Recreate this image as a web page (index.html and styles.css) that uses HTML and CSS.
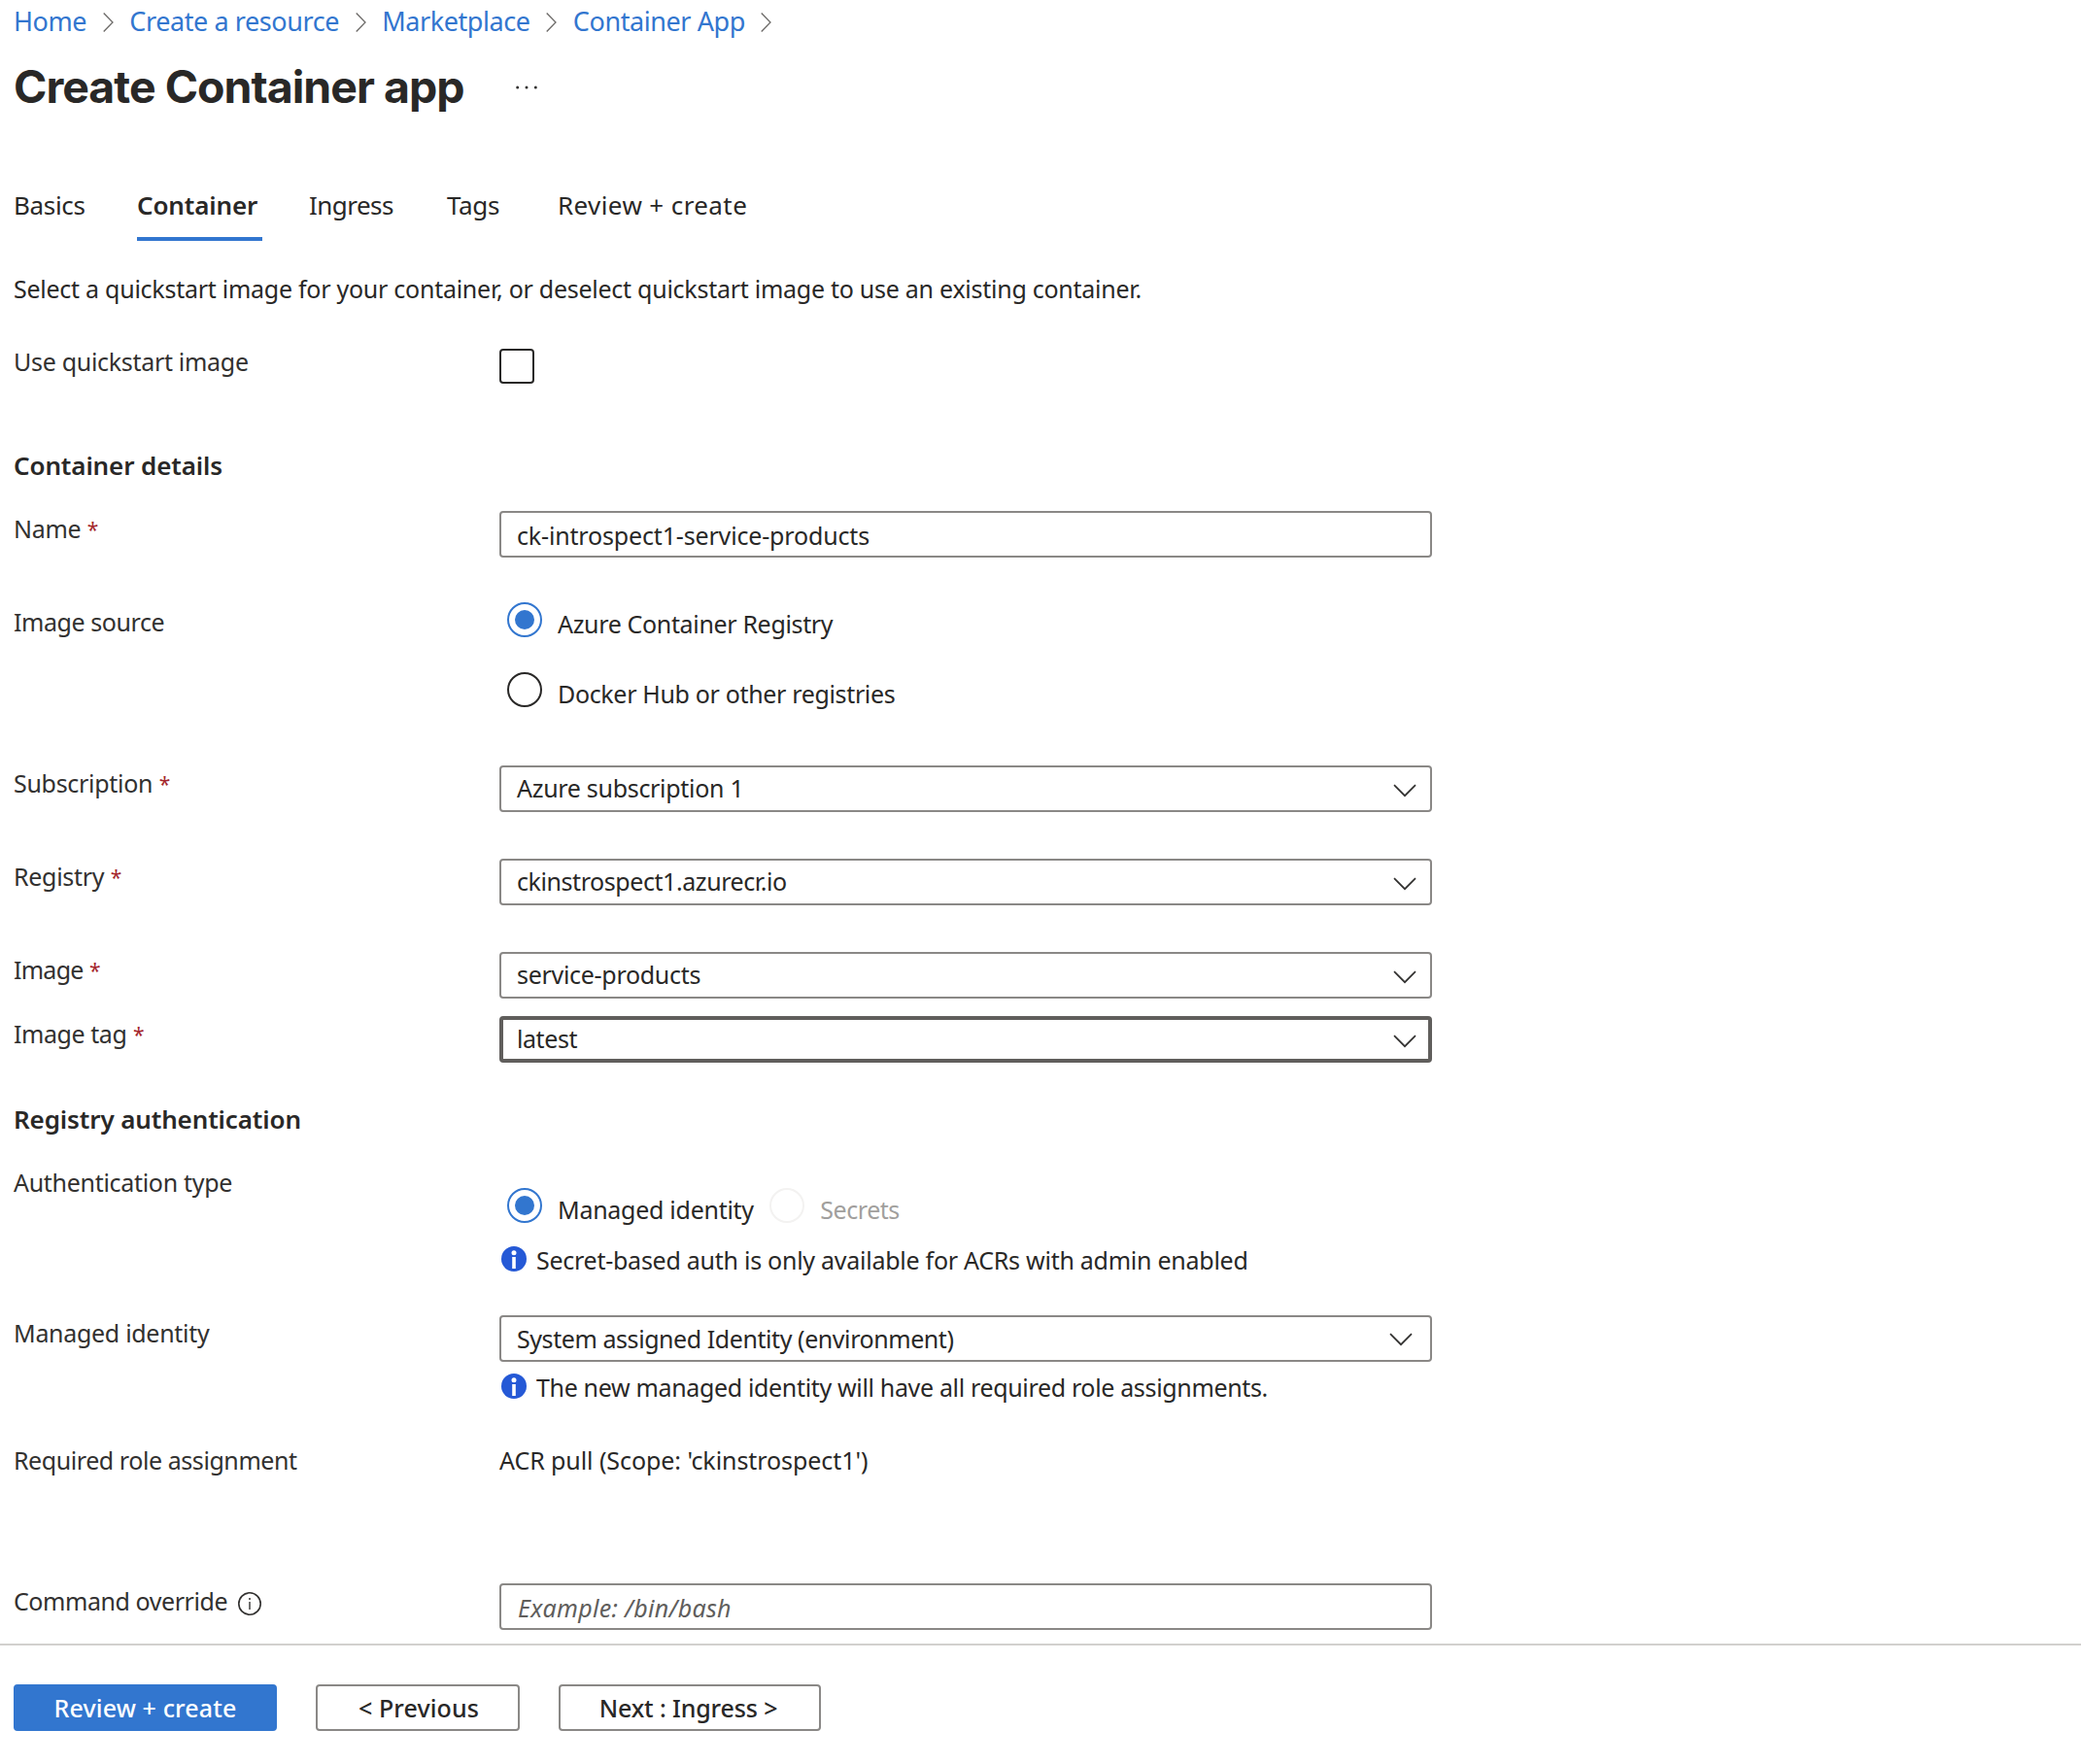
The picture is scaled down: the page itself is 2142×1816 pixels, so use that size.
FILE: index.html
```
<!DOCTYPE html>
<html lang="en">
<head>
<meta charset="utf-8">
<title>Create Container app</title>
<link rel="stylesheet" href="styles.css">
</head>
<body>
<svg class="sprite" aria-hidden="true">
  <symbol id="crumb" viewBox="0 0 11 20"><path d="M0.7 0.5 10 10 0.7 19.5" fill="none" stroke="#6b6967" stroke-width="1.3"/></symbol>
  <symbol id="chevron" viewBox="0 0 24 14"><path d="M1 1.2 12 12.2 23 1.2" fill="none" stroke="#323130" stroke-width="1.7"/></symbol>
  <symbol id="info" viewBox="0 0 26 26"><circle cx="13" cy="13" r="13" fill="#2559d6"/><circle cx="13" cy="6.7" r="2.5" fill="#fff"/><path d="M11.2 11h3.6v12h-3.6z" fill="#fff"/></symbol>
  <symbol id="info-outline" viewBox="0 0 24 24"><circle cx="12" cy="12" r="11.2" fill="none" stroke="#323130" stroke-width="1.6"/><circle cx="12" cy="7" r="1" fill="#323130"/><path d="M11.3 10h1.4v8h-1.4z" fill="#323130"/></symbol>
</svg>

<header class="header">
  <nav class="breadcrumb">
    <a>Home</a><svg><use href="#crumb"/></svg>
    <a>Create a resource</a><svg><use href="#crumb"/></svg>
    <a>Marketplace</a><svg><use href="#crumb"/></svg>
    <a>Container App</a><svg><use href="#crumb"/></svg>
  </nav>
  <div class="title-bar">
    <h1>Create Container app</h1>
    <svg class="more" viewBox="0 0 22 4"><g fill="#323130"><circle cx="1.7" cy="2" r="1.5"/><circle cx="11" cy="2" r="1.5"/><circle cx="20.3" cy="2" r="1.5"/></g></svg>
  </div>
  <nav class="tabs">
    <span class="tab">Basics</span>
    <span class="tab active">Container</span>
    <span class="tab tighter">Ingress</span>
    <span class="tab">Tags</span>
    <span class="tab wide">Review + create</span>
  </nav>
</header>

<main class="form">
  <p class="intro">Select a quickstart image for your container, or deselect quickstart image to use an existing container.</p>

  <div class="row row-quickstart">
    <label>Use quickstart image</label>
    <div class="checkbox"></div>
  </div>

  <h2>Container details</h2>
  <div class="row">
    <label>Name<span class="req">*</span></label>
    <div class="field input loose">ck-introspect1-service-products</div>
  </div>
  <div class="row row-source">
    <label class="tight">Image source</label>
    <div class="radios-stacked">
      <div class="radio checked"><i></i><span>Azure Container Registry</span></div>
      <div class="radio"><i></i><span>Docker Hub or other registries</span></div>
    </div>
  </div>
  <div class="row">
    <label>Subscription<span class="req">*</span></label>
    <div class="field select">Azure subscription 1<svg><use href="#chevron"/></svg></div>
  </div>
  <div class="row">
    <label>Registry<span class="req">*</span></label>
    <div class="field select tight">ckinstrospect1.azurecr.io<svg><use href="#chevron"/></svg></div>
  </div>
  <div class="row row-image">
    <label><span class="tighter">Image</span><span class="req">*</span></label>
    <div class="field select">service-products<svg><use href="#chevron"/></svg></div>
  </div>
  <div class="row row-tag">
    <label><span class="tight">Image tag</span><span class="req">*</span></label>
    <div class="field select focused tight">latest<svg><use href="#chevron"/></svg></div>
  </div>

  <h2>Registry authentication</h2>
  <div class="row row-auth">
    <label>Authentication type</label>
    <div class="auth">
      <div class="radios-inline">
        <div class="radio checked"><i></i><span>Managed identity</span></div>
        <div class="radio disabled"><i></i><span>Secrets</span></div>
      </div>
      <div class="hint loose-hint"><svg><use href="#info"/></svg>Secret-based auth is only available for ACRs with admin enabled</div>
    </div>
  </div>
  <div class="row row-identity">
    <label>Managed identity</label>
    <div class="identity">
      <div class="field combo tight">System assigned Identity (environment)<svg><use href="#chevron"/></svg></div>
      <div class="hint"><svg><use href="#info"/></svg>The new managed identity will have all required role assignments.</div>
    </div>
  </div>
  <div class="row row-role">
    <label class="tight">Required role assignment</label>
    <div class="value">ACR pull (Scope: 'ckinstrospect1')</div>
  </div>
  <div class="row row-command">
    <label><span class="tight">Command override</span><svg class="help"><use href="#info-outline"/></svg></label>
    <div class="field input placeholder">Example: /bin/bash</div>
  </div>
</main>

<footer class="footer">
  <button class="btn primary">Review + create</button>
  <button class="btn previous">&lt; Previous</button>
  <button class="btn next">Next : Ingress &gt;</button>
</footer>
</body>
</html>
```
FILE: styles.css
```
* { box-sizing: border-box; }

body {
  margin: 0;
  height: 1816px;
  display: flex;
  flex-direction: column;
  background: #fff;
  color: #292827;
  font: 25px/36px "Noto Sans", sans-serif;
  letter-spacing: -0.3px;
  overflow: hidden;
}

.sprite { display: none; }
svg { display: block; flex: none; }

/* letter-spacing tweaks */
.tight { letter-spacing: -0.43px; }
.tighter { letter-spacing: -0.75px; }
.loose { letter-spacing: -0.16px; }

/* header */
.header { padding-left: 14px; height: 279px; flex: none; }

.breadcrumb {
  display: flex;
  align-items: center;
  gap: 16.6px;
  height: 44px;
  font-size: 27px;
  line-height: 44px;
  letter-spacing: -0.42px;
  color: #3276cf;
}
.breadcrumb svg { width: 11px; height: 20px; margin-top: 2px; }

.title-bar { display: flex; margin-top: 15px; height: 134px; }
.title-bar h1 {
  margin: 0;
  font: 700 46.5px/60px Inter, sans-serif;
  letter-spacing: -1px;
}
.more { width: 22px; height: 4px; margin: 29px 0 0 53px; }

.tabs {
  display: grid;
  grid-template-columns: 127px 177px 142px 114px auto;
  height: 55px;
  font-size: 26px;
  letter-spacing: -0.35px;
}
.tab.active {
  margin-right: 48px;
  border-bottom: 4px solid #3276cf;
  font-weight: 600;
  letter-spacing: -0.14px;
}
.tab.tighter { letter-spacing: -0.55px; }
.tab.wide { letter-spacing: 0.4px; }

/* form */
.form { padding-left: 14px; height: 1413px; flex: none; }
.intro { margin: 0; height: 75px; letter-spacing: -0.26px; }

h2 {
  margin: 0;
  height: 65px;
  font-size: 26px;
  font-weight: 600;
  line-height: 36px;
  letter-spacing: -0.12px;
}

.row {
  display: grid;
  grid-template-columns: 500px 960px;
  align-items: start;
  height: 96px;
}
.row-quickstart { height: 107px; }
.row-source { height: 166px; }
.row-image { height: 66px; }
.row-tag { height: 88px; }
.row-auth { height: 155px; }
.row-identity { height: 131px; }
.row-role { height: 145px; }
.row-command { height: 62px; }

label { display: flex; color: #323130; }
.req { margin: 1px 0 0 6.5px; font-size: 21px; line-height: 36px; color: #a4262c; }
.help { width: 24px; height: 24px; margin: 9px 0 0 10.5px; }

.checkbox {
  width: 36px;
  height: 36px;
  margin-top: 5px;
  border: 2px solid #292827;
  border-radius: 4px;
}

.field {
  display: flex;
  justify-content: space-between;
  height: 48px;
  padding: 0 15px 0 16px;
  border: 2px solid #8a8886;
  border-radius: 4px;
}
.field svg { width: 24px; height: 14px; margin-top: 17px; }
.input { line-height: 46px; }
.select { line-height: 42px; padding-right: 14px; }
.combo { line-height: 44px; padding-right: 18px; }
.combo svg { margin-top: 16px; }
.focused { border: 4px solid #605e5c; padding: 0 12px 0 14px; line-height: 38px; }
.focused svg { margin-top: 15px; }
.placeholder { padding-left: 17px; color: #605e5c; font-style: italic; letter-spacing: 0.3px; }

/* radios */
.radios-stacked { display: grid; gap: 36px; margin-top: -2px; }
.radios-inline { display: flex; gap: 8.5px; }
.radio { display: flex; gap: 16px; height: 36px; padding-left: 8px; letter-spacing: -0.34px; }
.radio span { margin-top: 4px; }
.radio i {
  display: grid;
  place-items: center;
  width: 36px;
  height: 36px;
  border: 2px solid #292827;
  border-radius: 50%;
}
.radio.checked i { border-color: #3276cf; }
.radio.checked i::after {
  content: "";
  width: 20px;
  height: 20px;
  border-radius: 50%;
  background: #3276cf;
}
.radios-inline .radio { letter-spacing: -0.27px; }
.radios-inline .disabled { color: #a19f9d; letter-spacing: -0.46px; }
.radio.disabled i { border-color: #f3f2f1; }

.auth { padding-top: 24px; }
.hint { display: flex; gap: 10px; padding-left: 2px; margin-top: 8px; letter-spacing: -0.34px; }
.hint svg { width: 26px; height: 26px; margin-top: 4px; }
.auth .hint { margin-top: 20px; }
.loose-hint { letter-spacing: -0.26px; }
.value { letter-spacing: -0.07px; }

/* footer */
.footer {
  display: flex;
  gap: 40px;
  flex: 1;
  padding: 40px 14px 0;
  border-top: 2px solid #d2d0ce;
}
.btn {
  height: 48px;
  padding: 0;
  border: 2px solid #8a8886;
  border-radius: 4px;
  background: #fff;
  color: #292827;
  font: 500 25px/44px "Noto Sans", sans-serif;
}
.primary { width: 271px; border-color: #3276cf; background: #3276cf; color: #fff; letter-spacing: 0.14px; }
.previous { width: 210px; padding-left: 2px; letter-spacing: 0.1px; }
.next { width: 270px; padding-right: 3px; letter-spacing: -0.13px; }
```
